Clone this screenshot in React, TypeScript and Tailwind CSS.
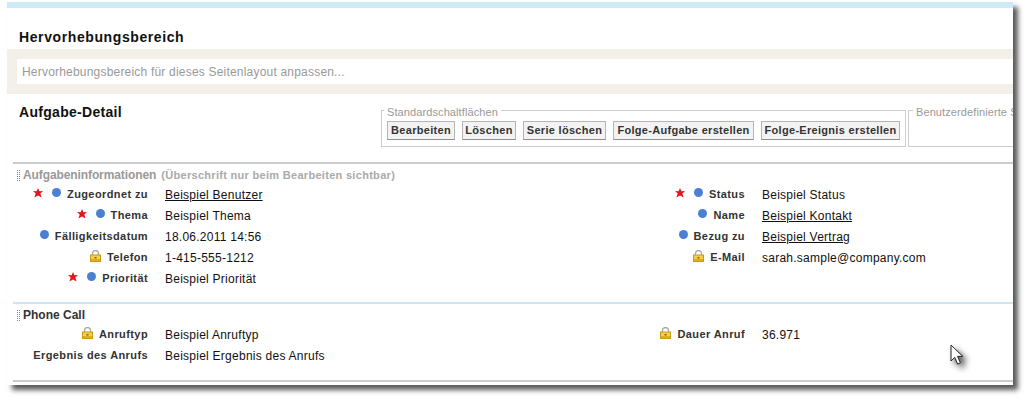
import React from 'react'

const Star = () => (
  <svg width="10" height="10" viewBox="0 0 10 10" className="mr-[9px] -mt-[3px] shrink-0">
    <path d="M5 0 6.4 3.3 10 3 7.3 5.5 8.6 9.6 5 7.4 1.4 9.6 2.7 5.5 0 3 3.6 3.3Z" fill="#e8141c" />
  </svg>
)

const Dot = () => (
  <span className="mr-[6px] -mt-[4px] h-[9px] w-[9px] shrink-0 rounded-full bg-[#4a7fd2]" />
)

const Lock = () => (
  <svg width="11" height="12" viewBox="0 0 11 12" className="mr-[6px] -mt-[3px] shrink-0">
    <path d="M2.5 5V3.5a3 3 0 0 1 6 0V5" fill="none" stroke="#a8a89c" strokeWidth="1.3" />
    <rect x="0.5" y="5" width="10" height="6.5" fill="#f6cf4a" stroke="#c79a1c" />
    <rect x="1" y="9" width="9" height="2" fill="#e3ab24" />
    <rect x="4.5" y="7" width="2" height="1.5" fill="#8a6510" />
  </svg>
)

type FieldProps = {
  label: string
  value?: string
  star?: boolean
  dot?: boolean
  lock?: boolean
  link?: boolean
}

function Field({ label, value, star, dot, lock, link }: FieldProps) {
  return (
    <div className="flex h-[21px] items-center">
      <div className="flex w-[135px] items-center justify-end text-[11px] font-bold tracking-[0.4px] text-[#333]">
        {star && <Star />}
        {dot && <Dot />}
        {lock && <Lock />}
        <span className="whitespace-nowrap">{label}</span>
      </div>
      <div className={`ml-[17px] text-[12px] tracking-[0.25px] text-[#111] ${link ? 'underline' : ''}`}>{value}</div>
    </div>
  )
}

const Grip = () => (
  <span className="mr-[3px] h-[11px] w-[3px] shrink-0 border-x border-dotted border-[#888]" />
)

const buttons = [
  { label: 'Bearbeiten', width: 'w-[68px]' },
  { label: 'Löschen', width: 'w-[54px]' },
  { label: 'Serie löschen', width: 'w-[83px]' },
  { label: 'Folge-Aufgabe erstellen', width: 'w-[141px]' },
  { label: 'Folge-Ereignis erstellen', width: 'w-[139px]' },
]

export default function App() {
  return (
    <div className="h-[400px] w-[1027px] overflow-hidden bg-white font-['Liberation_Sans',Arial,sans-serif]">
      <div className="relative ml-[7px] mt-[2px] h-[383px] w-[1006px] overflow-hidden bg-white shadow-[5px_5px_5px_rgba(0,0,0,0.65)]">
        <div className="h-[6px] bg-[#cfeaf6]" />

        <h2 className="ml-[12px] mt-[21px] text-[14px] font-bold leading-[16px] tracking-[0.6px] text-[#111]">
          Hervorhebungsbereich
        </h2>
        <div className="mt-[4px] bg-[#f2f0e9] py-[10px] pl-[10px]">
          <div className="flex h-[25px] items-center bg-white pl-[5px] text-[12px] tracking-[0.2px] text-[#999]">
            Hervorhebungsbereich für dieses Seitenlayout anpassen...
          </div>
        </div>

        <div className="flex h-[68px] items-start">
          <h2 className="ml-[12px] mt-[10px] w-[362px] shrink-0 text-[14px] font-bold leading-[16px] tracking-[0.3px] text-[#111]">
            Aufgabe-Detail
          </h2>
          <fieldset className="mt-[9px] h-[44px] w-[525px] shrink-0 border border-[#ccc] px-[5px]">
            <legend className="-ml-[3px] px-[3px] pt-[4px] text-[11px] leading-[11px] tracking-[0.1px] text-[#999]">Standardschaltflächen</legend>
            <div className="mt-[3px] flex gap-[7px]">
              {buttons.map((b) => (
                <button
                  key={b.label}
                  className={`${b.width} h-[19px] shrink-0 border border-[#b5b5b5] border-b-[#8f8f8f] bg-[#f3f3f3] text-center text-[11px] font-bold leading-[17px] tracking-[0.3px] text-[#333]`}
                >
                  {b.label}
                </button>
              ))}
            </div>
          </fieldset>
          <fieldset className="ml-[2px] mt-[9px] h-[44px] min-w-0 flex-1 border border-r-0 border-[#ccc] px-[5px]">
            <legend className="-ml-[1px] whitespace-nowrap px-[3px] pt-[4px] text-[11px] leading-[11px] tracking-[0.1px] text-[#999]">Benutzerdefinierte S</legend>
          </fieldset>
        </div>

        <section className="ml-[6px] border-t-2 border-[#ccc] pt-[3px]">
          <div className="flex h-[16px] items-center pl-[4px]">
            <Grip />
            <span className="text-[12px] font-bold tracking-[-0.1px] text-[#999]">Aufgabeninformationen</span>
            <span className="ml-[5px] text-[11px] font-bold tracking-[0.3px] text-[#aaa]">(Überschrift nur beim Bearbeiten sichtbar)</span>
          </div>
          <div className="mt-[1px] grid grid-cols-[597px_1fr]">
            <Field label="Zugeordnet zu" value="Beispiel Benutzer" star dot link />
            <Field label="Status" value="Beispiel Status" star dot />
            <Field label="Thema" value="Beispiel Thema" star dot />
            <Field label="Name" value="Beispiel Kontakt" dot link />
            <Field label="Fälligkeitsdatum" value="18.06.2011 14:56" dot />
            <Field label="Bezug zu" value="Beispiel Vertrag" dot link />
            <Field label="Telefon" value="1-415-555-1212" lock />
            <Field label="E-Mail" value="sarah.sample@company.com" lock />
            <Field label="Priorität" value="Beispiel Priorität" star dot />
          </div>
        </section>

        <section className="ml-[6px] mt-[13px] border-t-2 border-[#cfe6f0] pt-[3px]">
          <div className="flex h-[16px] items-center pl-[4px]">
            <Grip />
            <span className="text-[12px] font-bold text-[#333]">Phone Call</span>
          </div>
          <div className="mt-[1px] grid grid-cols-[597px_1fr]">
            <Field label="Anruftyp" value="Beispiel Anruftyp" lock />
            <Field label="Dauer Anruf" value="36.971" lock />
            <Field label="Ergebnis des Anrufs" value="Beispiel Ergebnis des Anrufs" />
          </div>
        </section>

        <div className="ml-[6px] mt-[14px] border-t-2 border-[#ccc]" />

        <svg width="16" height="22" viewBox="0 0 16 22" className="absolute left-[943px] top-[342px] drop-shadow-[4px_4px_3px_rgba(0,0,0,0.7)]">
          <path d="M1 1V17L4.8 13.4 7.6 20 10.4 18.8 7.6 12.4H12.8Z" fill="#fff" stroke="#222" strokeWidth="1" />
        </svg>
      </div>
    </div>
  )
}
